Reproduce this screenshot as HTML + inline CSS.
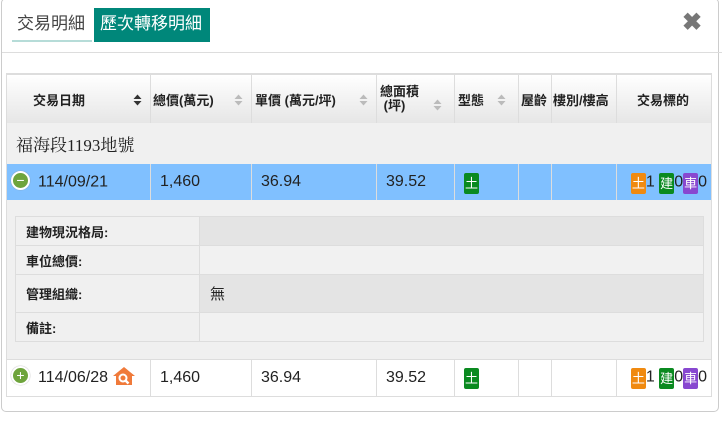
<!DOCTYPE html>
<html><head><meta charset="utf-8"><style>
*{box-sizing:border-box;margin:0;padding:0}
body{width:722px;height:433px;background:#fff;font-family:"Liberation Sans","Noto Sans CJK TC",sans-serif;position:relative;overflow:hidden;color:#222}
.modal{position:absolute;left:1px;top:-2px;width:718px;height:414px;border:1px solid #ccc;border-radius:5px;background:#fff}
.abs{position:absolute}
.tab1{left:10px;top:9px;width:80px;height:34px;font-size:17px;color:#444;line-height:32px;padding-left:5px;border-bottom:2px solid #b6dcd8}
.tab2{left:92px;top:9px;width:116px;height:34px;background:#00877a;color:#fff;font-size:17px;line-height:32px;padding-left:6px}
.close{left:680px;top:9px;font-size:24px;font-weight:bold;color:#777}
.hr{left:0;top:53px;width:722px;height:1px;background:#ddd}
table{border-collapse:collapse}
td,th{vertical-align:middle}
.main{position:absolute;left:6px;top:73px;width:706px;border:1px solid #ddd}
.main td,.main th{border-right:1px solid #ddd;padding:0}
.hd th{height:49px;background:linear-gradient(#fff,#e6e6e6);font-size:13px;font-weight:bold;text-align:left;color:#222;border-top:2px solid #ddd;position:relative}
.sort{position:absolute;right:8px;top:19px;width:9px;height:12px}
.grp td{height:41px;background:#f0f0f0;font-size:17px;font-family:"Liberation Serif","Noto Serif CJK SC",serif;padding-left:9px;border-right:none}
.sel td{height:36px;background:#80c0ff;font-size:16px;padding-left:9px}
.row td{height:37px;font-size:16px;padding-left:9px;border-top:1px solid #ddd}
.ic{display:inline-block;width:19px;height:19px;border-radius:50%;background:#6ea43c;border:2px solid #fff;color:#fff;font-size:14px;line-height:14px;text-align:center;vertical-align:middle;margin-right:8px;box-shadow:0 0 1px #888;position:relative;top:-2px}
.b{display:inline-block;width:15px;height:21px;color:#fff;font-size:13px;line-height:21px;text-align:center;border-radius:2px;vertical-align:middle;position:relative;top:1px}
.o{background:#f08a10}.g{background:#0a8a20}.p{background:#8848d0}
.det td{background:#f0f0f0;height:159px;padding:0;border-right:none}
.inner{margin:0 0 0 8px;width:689px;border:1px solid #ddd}
.inner td{border:1px solid #ddd;font-size:13px;font-weight:bold;height:29px;padding-left:10px}
.inner td.v{background:#e4e4e4;font-weight:normal;font-size:15px}
.inner tr:nth-child(even) td.v{background:#f1f1f1}
</style></head><body>
<div class="modal">
<div class="abs tab1">交易明細</div>
<div class="abs tab2">歷次轉移明細</div>
<div class="abs close">✖</div>
<div class="abs hr"></div>
</div>
<table class="main">
<tr class="hd">
<th style="width:144px;padding-left:26px">交易日期 <svg class="sort" viewBox="0 0 9 12"><path d="M0.5 5 L4.5 0.5 L8.5 5Z M0.5 7 L4.5 11.5 L8.5 7Z" fill="#333"/></svg></th>
<th style="width:101px;padding-left:2px">總價(萬元)<svg class="sort" viewBox="0 0 9 12"><path d="M0.5 5 L4.5 0.5 L8.5 5Z M0.5 7 L4.5 11.5 L8.5 7Z" fill="#bbb"/></svg></th>
<th style="width:125px;padding-left:3px">單價 (萬元/坪)<svg class="sort" viewBox="0 0 9 12"><path d="M0.5 5 L4.5 0.5 L8.5 5Z M0.5 7 L4.5 11.5 L8.5 7Z" fill="#bbb"/></svg></th>
<th style="width:78px;padding-left:3px;line-height:14px">總面積<br>&nbsp;(坪)<svg class="sort" style="top:24px;right:12px" viewBox="0 0 9 12"><path d="M0.5 5 L4.5 0.5 L8.5 5Z M0.5 7 L4.5 11.5 L8.5 7Z" fill="#bbb"/></svg></th>
<th style="width:64px;padding-left:3px">型態<svg class="sort" style="right:12px" viewBox="0 0 9 12"><path d="M0.5 5 L4.5 0.5 L8.5 5Z M0.5 7 L4.5 11.5 L8.5 7Z" fill="#bbb"/></svg></th>
<th style="width:33px;padding-left:2px">屋齡</th>
<th style="width:65px;padding-left:1px">樓別/樓高</th>
<th style="padding-left:20px;border-right:none">交易標的</th>
</tr>
<tr class="grp"><td colspan="8">福海段1193地號</td></tr>
<tr class="sel"><td style="padding-left:4px"><span class="ic">−</span>114/09/21</td><td>1,460</td><td>36.94</td><td>39.52</td><td><span class="b g">土</span></td><td></td><td></td><td style="text-align:right;padding-right:4px;border-right:none"><span class="b o">土</span>1 <span class="b g">建</span>0<span class="b p">車</span>0</td></tr>
<tr class="det"><td colspan="8">
<table class="inner">
<tr><td style="width:184px">建物現況格局:</td><td class="v"></td></tr>
<tr><td>車位總價:</td><td class="v"></td></tr>
<tr><td style="height:38px">管理組織:</td><td class="v">無</td></tr>
<tr><td>備註:</td><td class="v"></td></tr>
</table></td></tr>
<tr class="row"><td style="padding-left:4px"><span class="ic">+</span>114/06/28 <svg width="24" height="20" viewBox="0 0 24 20" style="vertical-align:middle;position:relative;top:-2px"><path d="M12 1 L23 10 L20 10 L20 19 L4 19 L4 10 L1 10Z" fill="#f07a3a"/><circle cx="11" cy="12" r="3.5" fill="none" stroke="#fff" stroke-width="2"/><path d="M13.5 14.5 L16.5 17.5" stroke="#fff" stroke-width="2.5"/></svg></td><td>1,460</td><td>36.94</td><td>39.52</td><td><span class="b g">土</span></td><td></td><td></td><td style="text-align:right;padding-right:4px;border-right:none"><span class="b o">土</span>1 <span class="b g">建</span>0<span class="b p">車</span>0</td></tr>
</table>
</body></html>
